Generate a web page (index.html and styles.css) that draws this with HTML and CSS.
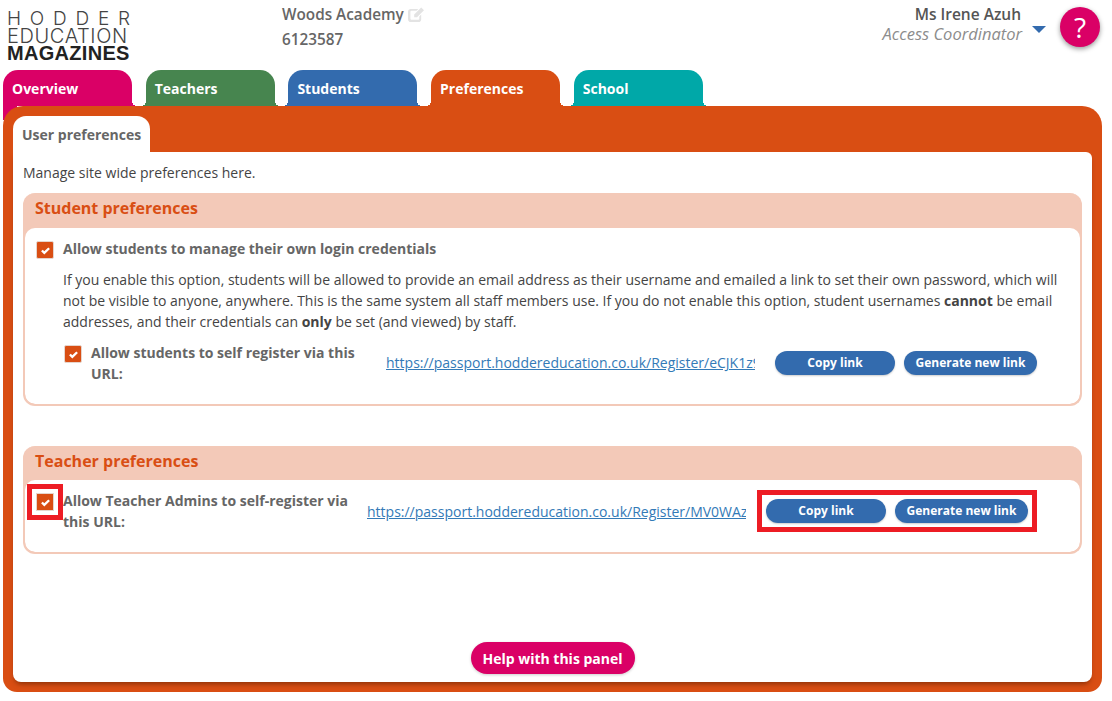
FILE: index.html
```html
<!DOCTYPE html>
<html>
<head>
  <title>Preferences</title>
  <link rel="stylesheet" href="styles.css">
</head>
<body>

<div class="top">
  <div class="logo">
    <div class="logo-a">HODDER</div>
    <div class="logo-b">EDUCATION</div>
    <div class="logo-c">MAGAZINES</div>
  </div>
  <div class="school">
    <div class="school-name">Woods Academy
      <svg class="edit" width="17" height="15" viewBox="0 0 18 16">
        <path d="M3 2h8l-2 2H3.500A1 1 0 0 0 2.500 5v7.500a1 1 0 0 0 1 1H11a1 1 0 0 0 1-1V10l2-2v5a3 3 0 0 1-3 3H3a3 3 0 0 1-3-3V5a3 3 0 0 1 3-3z" fill="#e3e3e3"/>
        <path d="M14 0.500l3 3-7.500 7.500H6.500V8z" fill="#e3e3e3"/>
      </svg>
    </div>
    <div class="school-id">6123587</div>
  </div>
  <div class="user">
    <div class="user-name">Ms Irene Azuh</div>
    <div class="user-role">Access Coordinator</div>
  </div>
  <div class="caret"></div>
  <div class="help-round">?</div>
</div>

<div class="tabs">
  <div class="tab tab-pink">Overview</div>
  <div class="tab tab-green">Teachers</div>
  <div class="tab tab-blue">Students</div>
  <div class="tab tab-orange">Preferences</div>
  <div class="tab tab-teal">School</div>
</div>

<div class="panel">
  <div class="subtab">User preferences</div>
  <div class="sheet">
    <p class="intro">Manage site wide preferences here.</p>

    <div class="group group-students">
      <h2>Student preferences</h2>
      <div class="group-body">
        <div class="check-line">
          <span class="check"><svg width="11" height="9" viewBox="0 0 12 10"><path d="M2 5l2.700 2.700L10 2.500" fill="none" stroke="#fff" stroke-width="2.600"/></svg></span>
          <span class="label">Allow students to manage their own login credentials</span>
        </div>
        <p class="note">If you enable this option, students will be allowed to provide an email address as their username and emailed a link to set their own password, which will not be visible to anyone, anywhere. This is the same system all staff members use. If you do not enable this option, student usernames <b>cannot</b> be email addresses, and their credentials can <b>only</b> be set (and viewed) by staff.</p>
        <div class="url-row url-row-inner">
          <span class="check"><svg width="11" height="9" viewBox="0 0 12 10"><path d="M2 5l2.700 2.700L10 2.500" fill="none" stroke="#fff" stroke-width="2.600"/></svg></span>
          <span class="label url-label">Allow students to self register via this URL:</span>
          <a class="url url-a" href="#">https://passport.hoddereducation.co.uk/Register/eCJK1z9xTq</a>
          <div class="btns">
            <button class="btn btn-copy">Copy link</button>
            <button class="btn btn-new">Generate new link</button>
          </div>
        </div>
      </div>
    </div>

    <div class="group group-teachers">
      <h2>Teacher preferences</h2>
      <div class="group-body">
        <div class="url-row">
          <span class="check marked"><svg width="11" height="9" viewBox="0 0 12 10"><path d="M2 5l2.700 2.700L10 2.500" fill="none" stroke="#fff" stroke-width="2.600"/></svg></span>
          <span class="label url-label">Allow Teacher Admins to self-register via this URL:</span>
          <a class="url url-b" href="#">https://passport.hoddereducation.co.uk/Register/MV0WAzPk3d</a>
          <div class="btns marked">
            <button class="btn btn-copy">Copy link</button>
            <button class="btn btn-new">Generate new link</button>
          </div>
        </div>
      </div>
    </div>

    <button class="help-panel">Help with this panel</button>
  </div>
</div>

</body>
</html>
```

FILE: styles.css
```css
* {
  box-sizing: border-box;
}
body {
  margin: 0;
  height: 701px;
  overflow: hidden;
  background: #fff;
  font-family: "Open Sans", sans-serif;
  font-size: 14px;
  color: #444;
}

/* header */
.top {
  display: flex;
  height: 70px;
  padding: 7px 12px 0 7px;
}
.logo {
  width: 125px;
  white-space: nowrap;
  font-family: "Liberation Sans", sans-serif;
}
.logo-a {
  font-size: 19px;
  line-height: 19px;
  margin-top: 2px;
  letter-spacing: 8.800px;
  color: #444;
  font-family: "Inter", sans-serif;
  font-weight: 300;
}
.logo-b {
  font-size: 20px;
  line-height: 17px;
  letter-spacing: 0.600px;
  color: #444;
  font-family: "Inter", sans-serif;
  font-weight: 300;
}
.logo-c {
  font-size: 20px;
  line-height: 17px;
  font-weight: bold;
  letter-spacing: 0.300px;
  color: #222;
}
.school {
  margin-left: 150px;
  margin-top: -5px;
  width: 300px;
  font-size: 15.300px;
  font-weight: 600;
  color: #666;
  line-height: 25px;
}
.edit {
  vertical-align: -2px;
}
.user {
  margin-left: auto;
  text-align: right;
  line-height: 20px;
  margin-top: -3px;
  font-size: 15.500px;
}
.user-name {
  font-weight: 600;
  color: #555;
  margin-right: 1px;
}
.user-role {
  font-style: italic;
  color: #8c8c8c;
  font-size: 16.500px;
}
.caret {
  width: 0;
  height: 0;
  margin: 19px 14px 0 10px;
  border-left: 7px solid transparent;
  border-right: 7px solid transparent;
  border-top: 7px solid #336bae;
}
.help-round {
  width: 40px;
  height: 40px;
  border-radius: 50%;
  background: #da0066;
  color: #fff;
  font-size: 28px;
  line-height: 40px;
  text-align: center;
  box-shadow: 0 2px 5px rgba(0, 0, 0, 0.4);
}

/* main tabs */
.tabs {
  display: flex;
  gap: 13.700px;
  height: 36px;
  margin-left: 3px;
}
.tab {
  position: relative;
  width: 129px;
  height: 36px;
  padding: 9px 0 0 9px;
  border-radius: 15px 15px 0 0;
  color: #fff;
  font-weight: bold;
  line-height: 19px;
}
.tab::after,
.tab::before {
  content: "";
  position: absolute;
  bottom: 0;
  width: 5px;
  height: 5px;
}
.tab::before {
  left: -5px;
}
.tab::after {
  right: -5px;
}
.tab-pink { background: #da0066; }
.tab-green { background: #47854f; }
.tab-blue { background: #336bae; }
.tab-orange { background: #d94e13; }
.tab-teal { background: #00a8a8; }
.tab-green::before { background: radial-gradient(circle at 0 0, transparent 5px, #47854f 5px); }
.tab-green::after { background: radial-gradient(circle at 100% 0, transparent 5px, #47854f 5px); }
.tab-blue::before { background: radial-gradient(circle at 0 0, transparent 5px, #336bae 5px); }
.tab-blue::after { background: radial-gradient(circle at 100% 0, transparent 5px, #336bae 5px); }
.tab-orange::before { background: radial-gradient(circle at 0 0, transparent 5px, #d94e13 5px); }
.tab-orange::after { background: radial-gradient(circle at 100% 0, transparent 5px, #d94e13 5px); }
.tab-teal::before { background: radial-gradient(circle at 0 0, transparent 5px, #00a8a8 5px); }
.tab-teal::after { background: radial-gradient(circle at 100% 0, transparent 5px, #00a8a8 5px); }
.tab-pink::after { background: radial-gradient(circle at 100% 0, transparent 5px, #da0066 5px); }
.tab-pink::before {
  left: 0;
  bottom: -14px;
  width: 14px;
  height: 14px;
  background: #da0066;
}

/* orange panel */
.panel {
  position: relative;
  width: 1099px;
  height: 586px;
  margin-left: 3px;
  padding: 10px;
  border-radius: 20px 20px 14px 14px;
  background: #d94e13;
}
.subtab {
  width: 137px;
  height: 36px;
  padding: 9px 0 0 9px;
  border-radius: 13px 13px 0 0;
  background: #fff;
  color: #666;
  font-weight: bold;
  line-height: 20px;
  white-space: nowrap;
}
.sheet {
  display: flex;
  flex-direction: column;
  height: 530px;
  padding: 11px 10px 8px;
  border-radius: 0 6px 8px 8px;
  background: #fff;
  box-shadow: 0 4px 5px -2px rgba(90, 30, 0, 0.6);
}
.intro {
  margin: 0 0 10px;
  line-height: 20px;
}

/* preference groups */
.group {
  border: 2px solid #f3c9b8;
  border-top: 0;
  border-radius: 12px;
  background: #f3c9b8;
  overflow: hidden;
}
.group h2 {
  margin: 0;
  height: 35px;
  padding: 3px 0 0 10px;
  color: #d94e13;
  font-size: 16px;
  font-weight: bold;
  line-height: 24px;
}
.group-body {
  height: calc(100% - 35px);
  border-radius: 10px;
  background: #fff;
}
.group-students {
  height: 213px;
  margin-bottom: 40px;
}
.group-teachers {
  height: 108px;
}
.group-teachers h2 {
  height: 34px;
}
.group-students .group-body {
  padding: 10px 20px 0 11px;
}
.group-teachers .group-body {
  height: calc(100% - 34px);
  padding: 10px 0 0 11px;
}
.check-line {
  display: flex;
  align-items: flex-start;
  gap: 9px;
}
.check-line .check {
  margin-top: 3px;
}
.check {
  display: flex;
  flex: none;
  align-items: center;
  justify-content: center;
  width: 18px;
  height: 18px;
  border: 1px solid #e6d5cd;
  border-radius: 2px;
  background: #d94e13;
}
.label {
  font-weight: bold;
  color: #666;
  line-height: 21px;
}
.note {
  margin: 10px 0 10px 27px;
  line-height: 21px;
  color: #444;
}
.url-row {
  display: flex;
  align-items: flex-start;
}
.url-row-inner {
  margin-left: 28px;
}
.url-row .check {
  margin: 3px 9px 0 0;
}
.url-row .url-label {
  width: 304px;
}
.url-row-inner .url-label {
  width: 295px;
}
.url {
  flex: none;
  overflow: hidden;
  white-space: nowrap;
  color: #337ab7;
  line-height: 21px;
  margin-top: 10px;
}
.url-b {
  width: 379px;
  margin-top: 11px;
}
.url-a {
  width: 369px;
}
.btns {
  display: flex;
  gap: 9px;
  margin: 9px 0 0 20px;
}
.btn {
  height: 24px;
  padding: 0 0 2px;
  border: 0;
  border-radius: 12px;
  background: #336bae;
  color: #fff;
  font-family: "Open Sans", sans-serif;
  font-size: 12px;
  font-weight: bold;
  box-shadow: 0 1px 2px rgba(0, 0, 0, 0.2);
}
.btn-copy {
  width: 120px;
}
.btn-new {
  width: 133px;
}

/* red callouts on the screenshot */
.marked {
  border-radius: 0;
  outline: 5px solid #ed1c24;
  outline-offset: 4px;
}

.help-panel {
  align-self: center;
  width: 164px;
  height: 32px;
  margin-top: auto;
  border: 0;
  border-radius: 16px;
  background: #da0066;
  color: #fff;
  font-family: "Open Sans", sans-serif;
  font-size: 14px;
  font-weight: bold;
  box-shadow: 0 1px 3px rgba(0, 0, 0, 0.2);
}
```
